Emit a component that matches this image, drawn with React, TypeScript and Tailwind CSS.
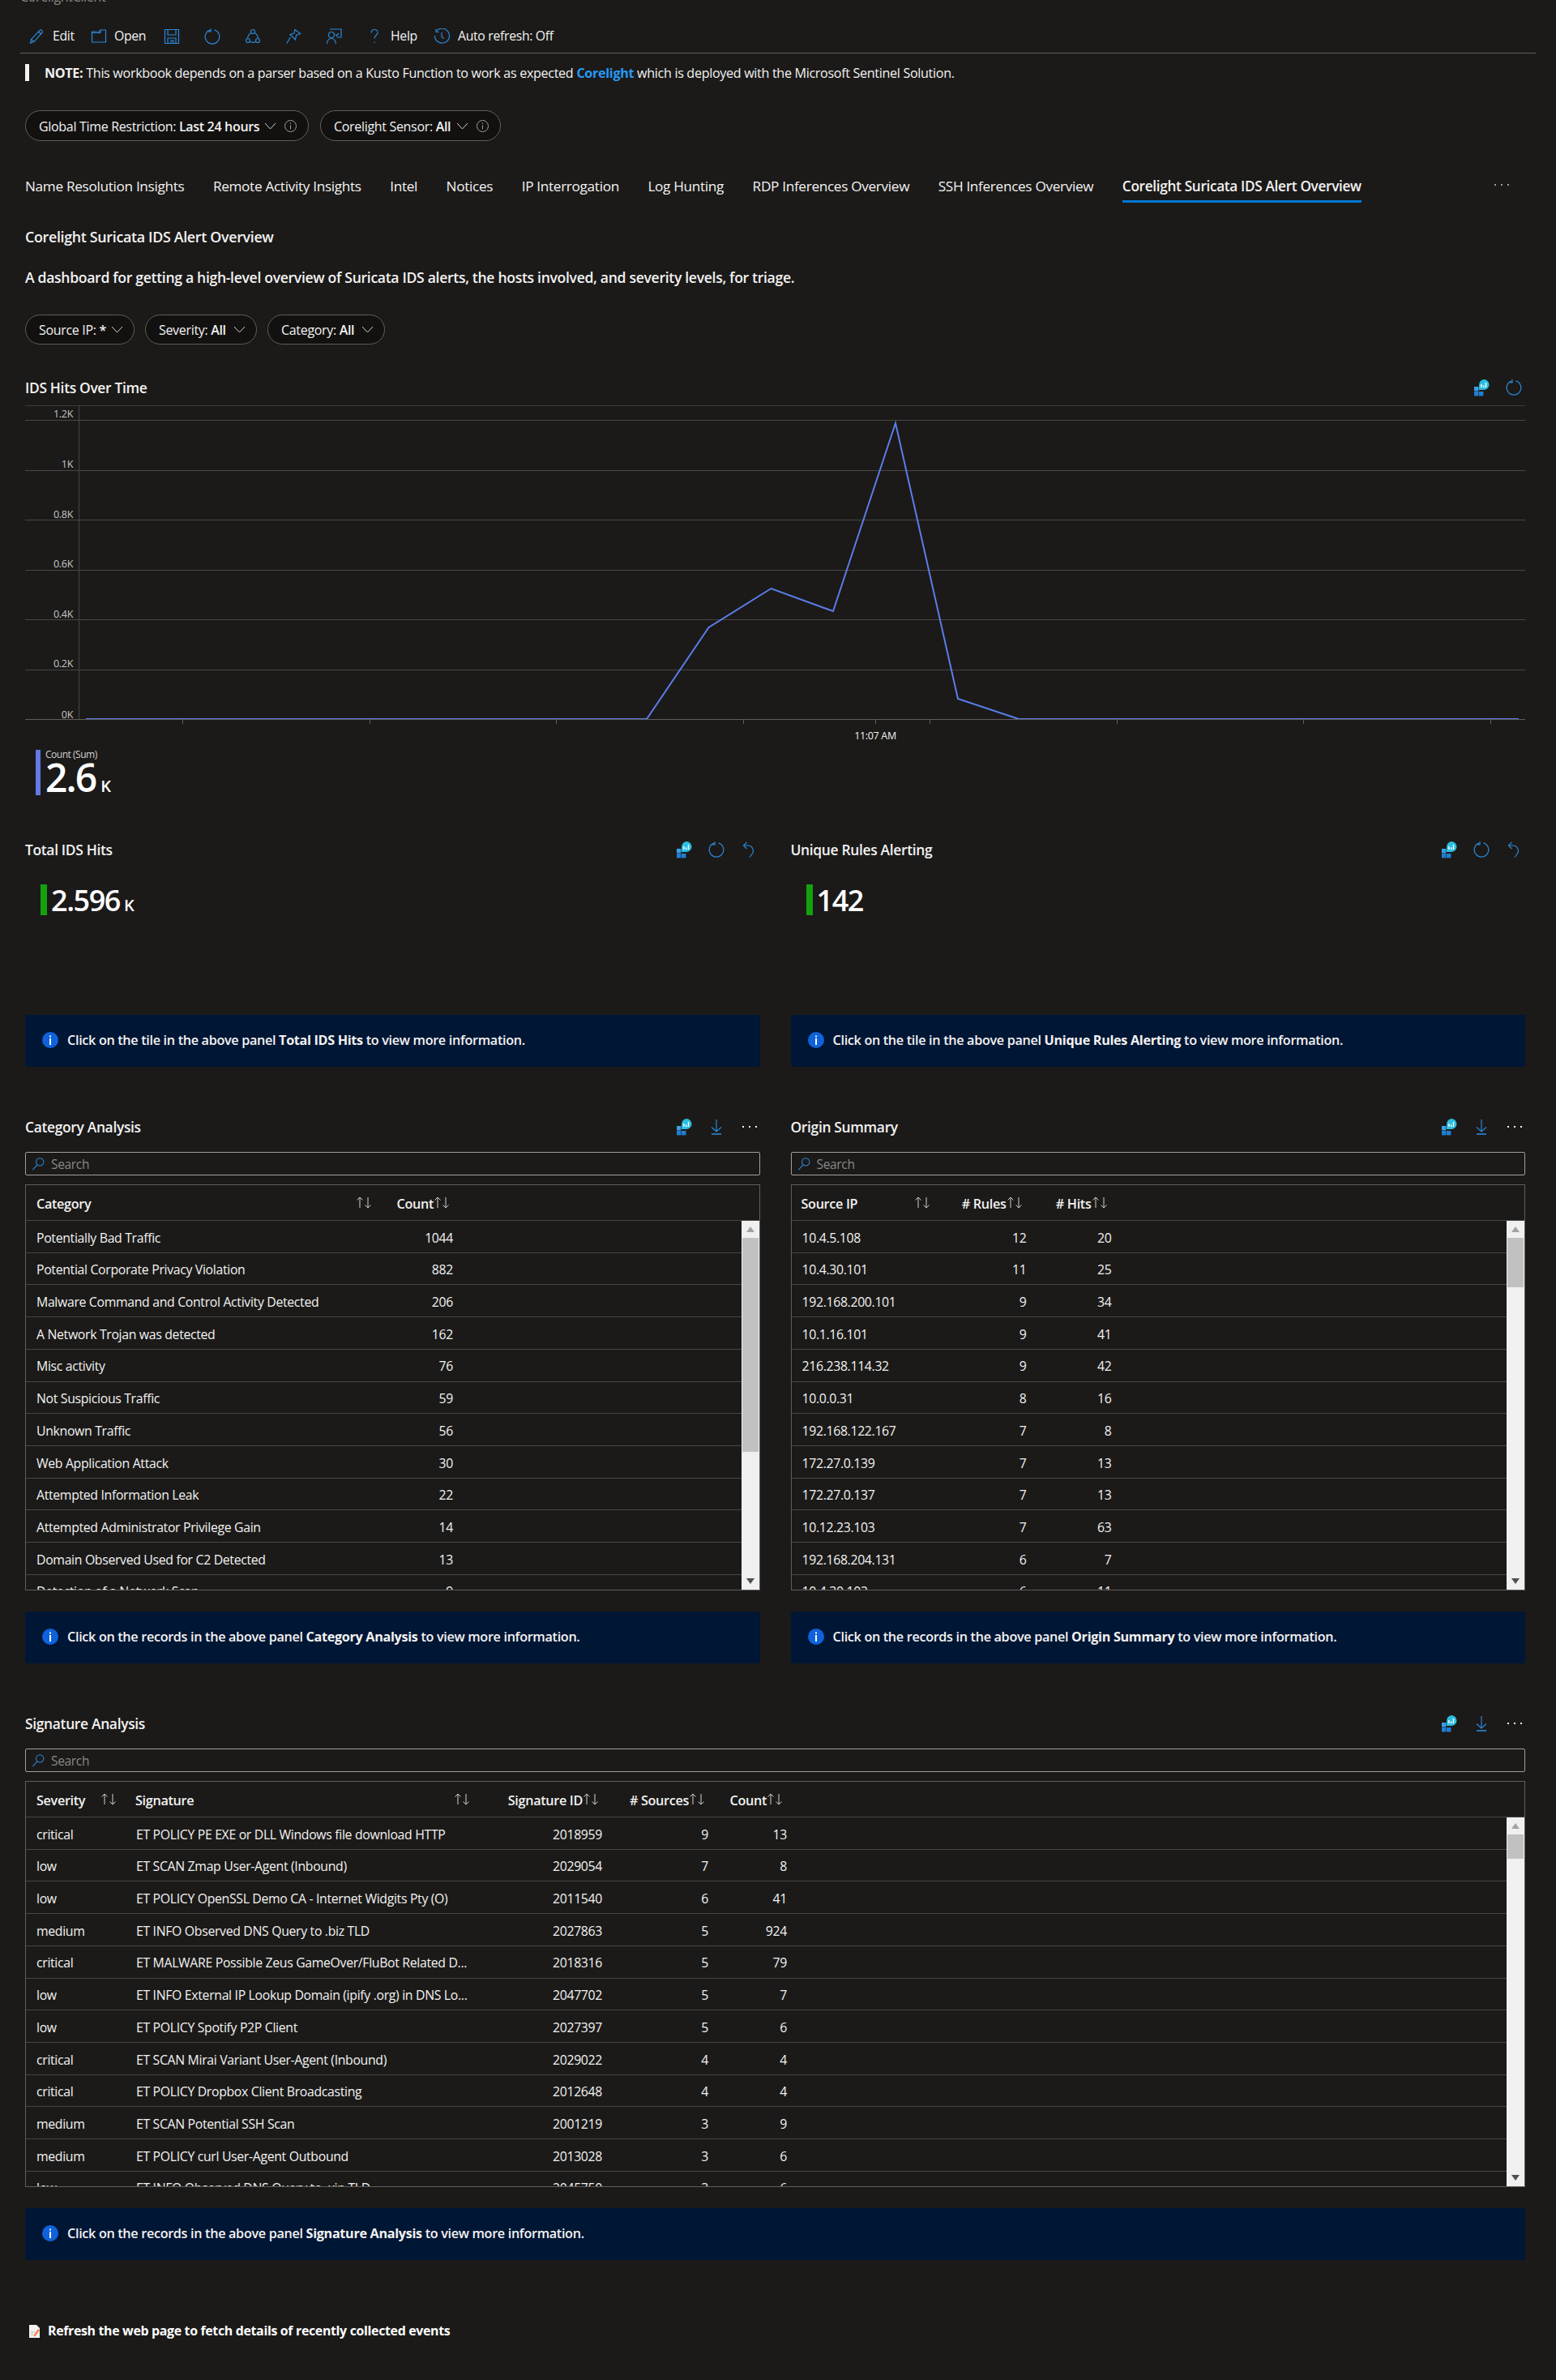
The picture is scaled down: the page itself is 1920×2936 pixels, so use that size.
import type { ReactNode } from 'react';

const BLUE = '#2b88d8';

function Svg({ size = 20, children, color = BLUE }: { size?: number; children: ReactNode; color?: string }) {
  return (
    <svg width={size} height={size} viewBox="0 0 20 20" fill="none" stroke={color} strokeWidth="1.2" className="shrink-0">
      {children}
    </svg>
  );
}

const EditIcon = () => <Svg><path d="M2.5 18l1.2-4.6L13.8 2.6c.9-.9 2.2-.9 3 0 .8.8.8 2 0 2.9L6.9 16.6 2.5 18zM3.7 13.4l3.2 3.2M12.6 4l3 3" /></Svg>;
const OpenIcon = () => <Svg><path d="M1.5 17V5.5h7L12 2h6.5v15h-17zM1.5 5.5V4h6" /><path d="M12 2v3.5H8.5" /></Svg>;
const SaveIcon = () => <Svg><path d="M1.5 1.5h17v17h-17zM5 1.5v6.5h10V1.5M5 18.5v-6.5h10v6.5M9 15h3v3.5H9z" /></Svg>;
const RefreshIcon = () => <Svg><path d="M12.5 1.8A8.800 8.800 0 1 1 7.500 1.800" /><path d="M8 .2v3.600H4.500" /></Svg>;
const UndoIcon = () => <Svg><path d="M4 5h5a6.500 6.500 0 0 1 5 10.500L11 19.500" /><path d="M7.500 1L3.500 5l4 4" /></Svg>;
const ShareIcon = () => <Svg><circle cx="10" cy="4" r="2.5" /><circle cx="4" cy="15" r="2.5" /><circle cx="16" cy="15" r="2.5" /><path d="M7.7 5.5C5 7.3 3.7 9.8 3.6 12.5M12.3 5.5c2.7 1.8 4 4.3 4.1 7M6.5 16.5c2.2 1 4.8 1 7 0" /></Svg>;
const PinIcon = () => <Svg><path d="M12 1.5l6.5 5-5 2-1 5.5-6.5-6.5 5-1.5 1-4.500zM6.200 11L2 18.500" /></Svg>;
const FeedbackIcon = () => <Svg><circle cx="7" cy="8" r="3.500" /><path d="M1.500 19c.2-4 2.500-6.500 5.500-6.500S12 15 12.500 19" /><path d="M6 2V1h13v10h-5.500" /><path d="M12 7.500l1.500 1.500 2.500-3" /></Svg>;
const HelpIcon = () => <Svg><path d="M6 5.500C6 3 8 1.500 10 1.500c2.500 0 4 1.700 4 3.700 0 3.300-4 3.300-4 7.300M10 16.500v1.500" /></Svg>;
const ClockIcon = () => <Svg><path d="M3.500 3.500A9 9 0 1 1 1.500 9" /><path d="M3 .8V4.500h3.700M10 5v5.500l3 2" /></Svg>;
const DownloadIcon = () => <Svg><path d="M10 1v15M4 10.500L10 16l6-5.500" /><path d="M4 19h12" strokeWidth="1.600" /></Svg>;
const SearchIcon = () => <Svg size={17}><circle cx="12" cy="7.500" r="5.500" /><path d="M8 12L1.500 19" /></Svg>;

function WorkbookIcon() {
  return (
    <svg width="20" height="22" viewBox="0 0 20 22" className="shrink-0">
      <rect x="1" y="10" width="5.400" height="5.400" fill="#3b9fe8" />
      <rect x="1" y="16" width="5.400" height="5.400" fill="#1f7fd1" />
      <rect x="7" y="16" width="5.400" height="5.400" fill="#1f7fd1" />
      <path d="M13 1a6.500 6.500 0 0 1 0 13H7V8a7 7 0 0 1 6-7z" fill="#2bbde0" />
      <rect x="9.200" y="7" width="1.400" height="4" fill="#fff" />
      <rect x="12" y="8.500" width="1.400" height="2.500" fill="#fff" />
      <rect x="14.800" y="5" width="1.400" height="6" fill="#fff" />
    </svg>
  );
}

function Dots({ color = '#f3f2f1' }: { color?: string }) {
  return (
    <svg width="22" height="4" viewBox="0 0 22 4" className="shrink-0">
      <rect x="2" y="1" width="2" height="2" fill={color} />
      <rect x="10" y="1" width="2" height="2" fill={color} />
      <rect x="18" y="1" width="2" height="2" fill={color} />
    </svg>
  );
}

function Chevron() {
  return (
    <svg width="15" height="15" viewBox="0 0 15 15" fill="none" stroke="#d2d0ce" strokeWidth="1" className="shrink-0">
      <path d="M1 4l6.500 7L14 4" />
    </svg>
  );
}

function InfoCircle() {
  return (
    <svg width="15" height="15" viewBox="0 0 15 15" fill="none" stroke="#a19f9d" strokeWidth="1" className="shrink-0">
      <circle cx="7.500" cy="7.500" r="7" />
      <path d="M7.500 6.500v5M7.500 3.500v1.500" />
    </svg>
  );
}

function SortArrows() {
  return (
    <svg width="21" height="15" viewBox="0 0 21 15" fill="none" stroke="#d2d0ce" strokeWidth="1" className="shrink-0">
      <path d="M5 14V1M1.500 4.500L5 1l3.500 3.500" />
      <path d="M15 1v13M11.500 10.500L15 14l3.500-3.500" />
    </svg>
  );
}

function Pill({ label, value, info, className }: { label: string; value: string; info?: boolean; className: string }) {
  return (
    <div className={`flex items-center justify-between h-full rounded-full border border-[#605e5c] bg-[#121110] text-[16px] text-[#f3f2f1] pl-[16px] ${info ? 'pr-[14px]' : 'pr-[13px]'} ${className}`}>
      <span className="whitespace-nowrap pt-[1px]">
        {label} <span className="font-semibold">{value}</span>
      </span>
      <div className="flex items-center gap-[10px]">
        <Chevron />
        {info && <InfoCircle />}
      </div>
    </div>
  );
}

function PanelHeader({ title, icons, className = '', iconPad = 'pr-[4px]' }: { title: string; icons: ReactNode; className?: string; iconPad?: string }) {
  return (
    <div className={`flex items-center justify-between h-[28px] ${className}`}>
      <span className="text-[17.4px] font-semibold text-[#f3f2f1]">{title}</span>
      <div className={`flex items-center gap-[20px] ${iconPad}`}>{icons}</div>
    </div>
  );
}

const TileIcons = () => (<><WorkbookIcon /><RefreshIcon /><UndoIcon /></>);
const GridIcons = () => (<><WorkbookIcon /><DownloadIcon /><Dots /></>);

function InfoBar({ title, prefix }: { title: string; prefix: string }) {
  return (
    <div className="flex items-center gap-[11px] h-[64px] pl-[21px] pb-[3px] bg-[#001635] rounded-[2px] text-[16.2px] font-semibold text-[#f3f2f1]">
      <svg width="20" height="20" viewBox="0 0 20 20" className="shrink-0">
        <circle cx="10" cy="10" r="10" fill="#0f62dc" />
        <rect x="9" y="8" width="2" height="8" fill="#fff" />
        <rect x="9" y="4.500" width="2" height="2" fill="#fff" />
      </svg>
      <span className="whitespace-nowrap pt-[1px]">
        Click on the {prefix} in the above panel <span className="font-bold">{title}</span> to view more information.
      </span>
    </div>
  );
}

function SearchBox() {
  return (
    <div className="flex items-center gap-[7px] h-[29px] mt-[17px] pl-[7px] rounded-[2px] border border-[#a19f9d] text-[15.500px] text-[#8a8886]">
      <SearchIcon />
      <span className="pt-[3px]">Search</span>
    </div>
  );
}

type Col = { label: string; width: string; right?: boolean; hdr: string };

function DataTable({ cols, rows, thumb }: { cols: Col[]; rows: string[][]; thumb: string }) {
  return (
    <div className="flex flex-col h-[501px] mt-[11px] border border-[#605e5c] overflow-hidden">
      <div className="flex h-[44px] shrink-0 border-b border-[#484644]">
        {cols.map((c) => (
          <div key={c.label} className={`flex items-center shrink-0 text-[16.2px] font-semibold text-[#f3f2f1] ${c.width} ${c.hdr}`}>
            <span className="whitespace-nowrap pt-[3px]">{c.label}</span>
            <SortArrows />
          </div>
        ))}
      </div>
      <div className="flex flex-1 min-h-0">
        <div className="flex-1 min-w-0">
          {rows.map((r, i) => (
            <div key={i} className="flex items-center h-[39.73px] pt-[4px] border-b border-[#484644] text-[15.8px] text-[#f3f2f1]">
              {cols.map((c, j) => (
                <div key={c.label} className={`shrink-0 whitespace-nowrap overflow-hidden ${c.width} ${c.right ? 'text-right pr-[12px]' : 'pl-[13px]'}`}>
                  {r[j]}
                </div>
              ))}
            </div>
          ))}
        </div>
        <div className="flex flex-col w-[22px] shrink-0 px-[1px] bg-[#f0f0f0]">
          <div className="flex items-center justify-center h-[21px] shrink-0">
            <div className="w-0 h-0 border-x-[5px] border-x-transparent border-b-[7px] border-b-[#a3a3a3]" />
          </div>
          <div className={`${thumb} shrink-0 bg-[#c1c1c1]`} />
          <div className="flex-1" />
          <div className="flex items-center justify-center h-[21px] shrink-0">
            <div className="w-0 h-0 border-x-[5px] border-x-transparent border-t-[7px] border-t-[#505050]" />
          </div>
        </div>
      </div>
    </div>
  );
}

const categoryCols: Col[] = [
  { label: 'Category', width: 'w-[444px]', hdr: 'justify-between pl-[13px] pr-[16px]' },
  { label: 'Count', width: 'w-[95px]', right: true, hdr: 'justify-end pr-[15px]' },
];
const categoryRows = [
  ['Potentially Bad Traffic', '1044'],
  ['Potential Corporate Privacy Violation', '882'],
  ['Malware Command and Control Activity Detected', '206'],
  ['A Network Trojan was detected', '162'],
  ['Misc activity', '76'],
  ['Not Suspicious Traffic', '59'],
  ['Unknown Traffic', '56'],
  ['Web Application Attack', '30'],
  ['Attempted Information Leak', '22'],
  ['Attempted Administrator Privilege Gain', '14'],
  ['Domain Observed Used for C2 Detected', '13'],
  ['Detection of a Network Scan', '9'],
];

const originCols: Col[] = [
  { label: 'Source IP', width: 'w-[188px]', hdr: 'justify-between pl-[12px] pr-[16px]' },
  { label: '# Rules', width: 'w-[114px]', right: true, hdr: 'justify-end pr-[16px]' },
  { label: '# Hits', width: 'w-[105px]', right: true, hdr: 'justify-end pr-[16px]' },
];
const originRows = [
  ['10.4.5.108', '12', '20'],
  ['10.4.30.101', '11', '25'],
  ['192.168.200.101', '9', '34'],
  ['10.1.16.101', '9', '41'],
  ['216.238.114.32', '9', '42'],
  ['10.0.0.31', '8', '16'],
  ['192.168.122.167', '7', '8'],
  ['172.27.0.139', '7', '13'],
  ['172.27.0.137', '7', '13'],
  ['10.12.23.103', '7', '63'],
  ['192.168.204.131', '6', '7'],
  ['10.4.30.102', '6', '11'],
];

const signatureCols: Col[] = [
  { label: 'Severity', width: 'w-[123px]', hdr: 'justify-between pl-[13px] pr-[10px]' },
  { label: 'Signature', width: 'w-[442px]', hdr: 'justify-between pl-[12px] pr-[16px]' },
  { label: 'Signature ID', width: 'w-[158px]', right: true, hdr: 'justify-end pr-[15px]' },
  { label: '# Sources', width: 'w-[131px]', right: true, hdr: 'justify-end pr-[15px]' },
  { label: 'Count', width: 'w-[97px]', right: true, hdr: 'justify-end pr-[16px]' },
];
const signatureRows = [
  ['critical', 'ET POLICY PE EXE or DLL Windows file download HTTP', '2018959', '9', '13'],
  ['low', 'ET SCAN Zmap User-Agent (Inbound)', '2029054', '7', '8'],
  ['low', 'ET POLICY OpenSSL Demo CA - Internet Widgits Pty (O)', '2011540', '6', '41'],
  ['medium', 'ET INFO Observed DNS Query to .biz TLD', '2027863', '5', '924'],
  ['critical', 'ET MALWARE Possible Zeus GameOver/FluBot Related D...', '2018316', '5', '79'],
  ['low', 'ET INFO External IP Lookup Domain (ipify .org) in DNS Lo...', '2047702', '5', '7'],
  ['low', 'ET POLICY Spotify P2P Client', '2027397', '5', '6'],
  ['critical', 'ET SCAN Mirai Variant User-Agent (Inbound)', '2029022', '4', '4'],
  ['critical', 'ET POLICY Dropbox Client Broadcasting', '2012648', '4', '4'],
  ['medium', 'ET SCAN Potential SSH Scan', '2001219', '3', '9'],
  ['medium', 'ET POLICY curl User-Agent Outbound', '2013028', '3', '6'],
  ['low', 'ET INFO Observed DNS Query to .xin TLD', '2045750', '3', '6'],
];

const tabs = ['Name Resolution Insights', 'Remote Activity Insights', 'Intel', 'Notices', 'IP Interrogation', 'Log Hunting', 'RDP Inferences Overview', 'SSH Inferences Overview'];

function HitsChart() {
  const gridY = [501, 519, 581, 642, 704, 765, 827];
  const labels: [string, number][] = [['1.2K', 512], ['1K', 574], ['0.8K', 636], ['0.6K', 697], ['0.4K', 759], ['0.2K', 820], ['0K', 883]];
  const ticks = [225, 456, 686, 917, 1080, 1147, 1378, 1608, 1839];
  return (
    <svg width="1851" height="414" viewBox="31 501 1851 414" className="block mt-[8px]">
      {gridY.map((y) => <line key={y} x1="31" x2="1882" y1={y + 0.5} y2={y + 0.5} stroke={y === 501 ? '#3b3a39' : '#484644'} />)}
      <line x1="97.500" x2="97.500" y1="501" y2="889" stroke="#484644" />
      {ticks.map((x) => <line key={x} x1={x + 0.5} x2={x + 0.5} y1="889" y2="894" stroke="#605e5c" />)}
      {labels.map(([t, y]) => <text key={t} x="90" y={y + 4} textAnchor="end" fontSize="12.500" fill="#c8c6c4">{t}</text>)}
      <text x="1080" y="913" textAnchor="middle" fontSize="12.500" fill="#f3f2f1">11:07 AM</text>
      <polyline points="106,888 798,888 874.500,775 951.500,727 1028,755 1105,523 1182,863 1257,888 1874,888" fill="none" stroke="#5b7de8" strokeWidth="2" />
      <line x1="31" x2="1882" y1="888.500" y2="888.500" stroke="#605e5c" />
    </svg>
  );
}

export default function App() {
  return (
    <div className="h-[2936px] overflow-hidden bg-[#1b1a19] text-[#f3f2f1] font-['Open_Sans',sans-serif] tracking-[-0.02em]">
      <div className="h-[24px] overflow-hidden pl-[25px]">
        <div className="-mt-[14px] text-[16px] leading-[20px] text-[#8a8886]">CorelightClient</div>
      </div>

      <div className="flex items-center h-[42px] mx-[25px] pl-[10px] border-b border-[#605e5c] text-[15.8px]">
        <div className="flex items-center gap-[10px] w-[77px] shrink-0"><EditIcon /><span>Edit</span></div>
        <div className="flex items-center gap-[9px] w-[90px] shrink-0"><OpenIcon /><span>Open</span></div>
        <div className="flex items-center w-[50px] shrink-0"><SaveIcon /></div>
        <div className="flex items-center w-[50px] shrink-0"><RefreshIcon /></div>
        <div className="flex items-center w-[50px] shrink-0"><ShareIcon /></div>
        <div className="flex items-center w-[50px] shrink-0"><PinIcon /></div>
        <div className="flex items-center w-[50px] shrink-0"><FeedbackIcon /></div>
        <div className="flex items-center gap-[10px] w-[83px] shrink-0"><HelpIcon /><span>Help</span></div>
        <div className="flex items-center gap-[10px]"><ClockIcon /><span>Auto refresh: Off</span></div>
      </div>

      <div className="pl-[31px] pr-[38px]">
        <div className="flex items-center h-[21px] mt-[13px] border-l-[5px] border-[#f3f2f1] pl-[19px] text-[16.13px] whitespace-nowrap">
          <span className="font-bold mr-[4px] pt-[2px]">NOTE:</span><span className="pt-[2px]">This workbook depends on a parser based on a Kusto Function to work as expected</span><span className="font-bold text-[#2899f5] mx-[4px] pt-[2px]">Corelight</span><span className="pt-[2px]">which is deployed with the Microsoft Sentinel Solution.</span>
        </div>

        <div className="flex gap-[14px] h-[38px] mt-[36px]">
          <Pill label="Global Time Restriction:" value="Last 24 hours" info className="w-[350px]" />
          <Pill label="Corelight Sensor:" value="All" info className="w-[223px]" />
        </div>

        <div className="flex gap-[35.5px] h-[41px] mt-[35px] text-[17.2px]">
          {tabs.map((t) => <span key={t} className="whitespace-nowrap leading-[41px]">{t}</span>)}
          <span className="whitespace-nowrap leading-[41px] h-[41px] font-semibold border-b-[3px] border-[#0078d4]">Corelight Suricata IDS Alert Overview</span>
          <div className="flex items-center h-[38px] ml-auto mr-[18px]"><Dots color="#a19f9d" /></div>
        </div>

        <div className="h-[20px] mt-[32px] text-[17.85px] font-semibold leading-[20px]">Corelight Suricata IDS Alert Overview</div>
        <div className="h-[20px] mt-[30px] text-[17.6px] font-semibold leading-[20px] whitespace-nowrap">
          A dashboard for getting a high-level overview of Suricata IDS alerts, the hosts involved, and severity levels, for triage.
        </div>

        <div className="flex gap-[13px] h-[37px] mt-[36px]">
          <Pill label="Source IP:" value="*" className="w-[135px]" />
          <Pill label="Severity:" value="All" className="w-[138px]" />
          <Pill label="Category:" value="All" className="w-[145px]" />
        </div>

        <PanelHeader title="IDS Hits Over Time" className="mt-[39px]" icons={<><WorkbookIcon /><RefreshIcon /></>} />
        <HitsChart />

        <div className="flex h-[56px] mt-[11px] ml-[13px] border-l-[6px] border-[#6478e6] pl-[6px]">
          <div className="flex flex-col">
            <span className="text-[12px] leading-[12px] text-[#d2d0ce] tracking-[-0.04em]">Count (Sum)</span>
            <div className="flex items-baseline gap-[6px] leading-[44px]">
              <span className="text-[48px] font-semibold text-white tracking-[-0.04em]">2.6</span>
              <span className="text-[20px] font-semibold text-white">K</span>
            </div>
          </div>
        </div>

        <div className="grid grid-cols-2 gap-x-[38px] mt-[53px]">
          <div>
            <PanelHeader title="Total IDS Hits" icons={<TileIcons />} />
            <div className="flex items-baseline gap-[5px] h-[38px] mt-[29px] ml-[19px] border-l-[8px] border-[#13a10e] pl-[5px] leading-[40px]">
              <span className="text-[36px] font-semibold text-white tracking-[-0.04em]">2.596</span>
              <span className="text-[20px] font-semibold text-white">K</span>
            </div>
            <div className="mt-[123px]"><InfoBar prefix="tile" title="Total IDS Hits" /></div>
          </div>
          <div>
            <PanelHeader title="Unique Rules Alerting" icons={<TileIcons />} />
            <div className="flex items-baseline h-[38px] mt-[29px] ml-[19px] border-l-[8px] border-[#13a10e] pl-[5px] leading-[40px]">
              <span className="text-[36px] font-semibold text-white tracking-[-0.04em]">142</span>
            </div>
            <div className="mt-[123px]"><InfoBar prefix="tile" title="Unique Rules Alerting" /></div>
          </div>
        </div>

        <div className="grid grid-cols-2 gap-x-[38px] mt-[60px]">
          <div>
            <PanelHeader title="Category Analysis" iconPad="pr-[2px]" icons={<GridIcons />} />
            <SearchBox />
            <DataTable cols={categoryCols} rows={categoryRows} thumb="h-[264px]" />
            <div className="mt-[26px]"><InfoBar prefix="records" title="Category Analysis" /></div>
          </div>
          <div>
            <PanelHeader title="Origin Summary" iconPad="pr-[2px]" icons={<GridIcons />} />
            <SearchBox />
            <DataTable cols={originCols} rows={originRows} thumb="h-[61px]" />
            <div className="mt-[26px]"><InfoBar prefix="records" title="Origin Summary" /></div>
          </div>
        </div>

        <PanelHeader title="Signature Analysis" className="mt-[60px]" iconPad="pr-[2px]" icons={<GridIcons />} />
        <SearchBox />
        <DataTable cols={signatureCols} rows={signatureRows} thumb="h-[30px]" />
        <div className="mt-[26px]"><InfoBar prefix="records" title="Signature Analysis" /></div>

        <div className="flex items-center gap-[9px] h-[20px] mt-[78px] pl-[5px] text-[15.9px] font-bold text-white">
          <svg width="14" height="16" viewBox="0 0 14 16" className="shrink-0">
            <path d="M0 0h9l4 4v12H0z" fill="#f3f2f1" />
            <path d="M2 9h5M2 12h3" stroke="#b9b9b9" strokeWidth="1" />
            <path d="M11 5l2 1.500-5 7-2.500 1 .5-2.500z" fill="#f7894a" />
          </svg>
          <span>Refresh the web page to fetch details of recently collected events</span>
        </div>
      </div>
    </div>
  );
}
